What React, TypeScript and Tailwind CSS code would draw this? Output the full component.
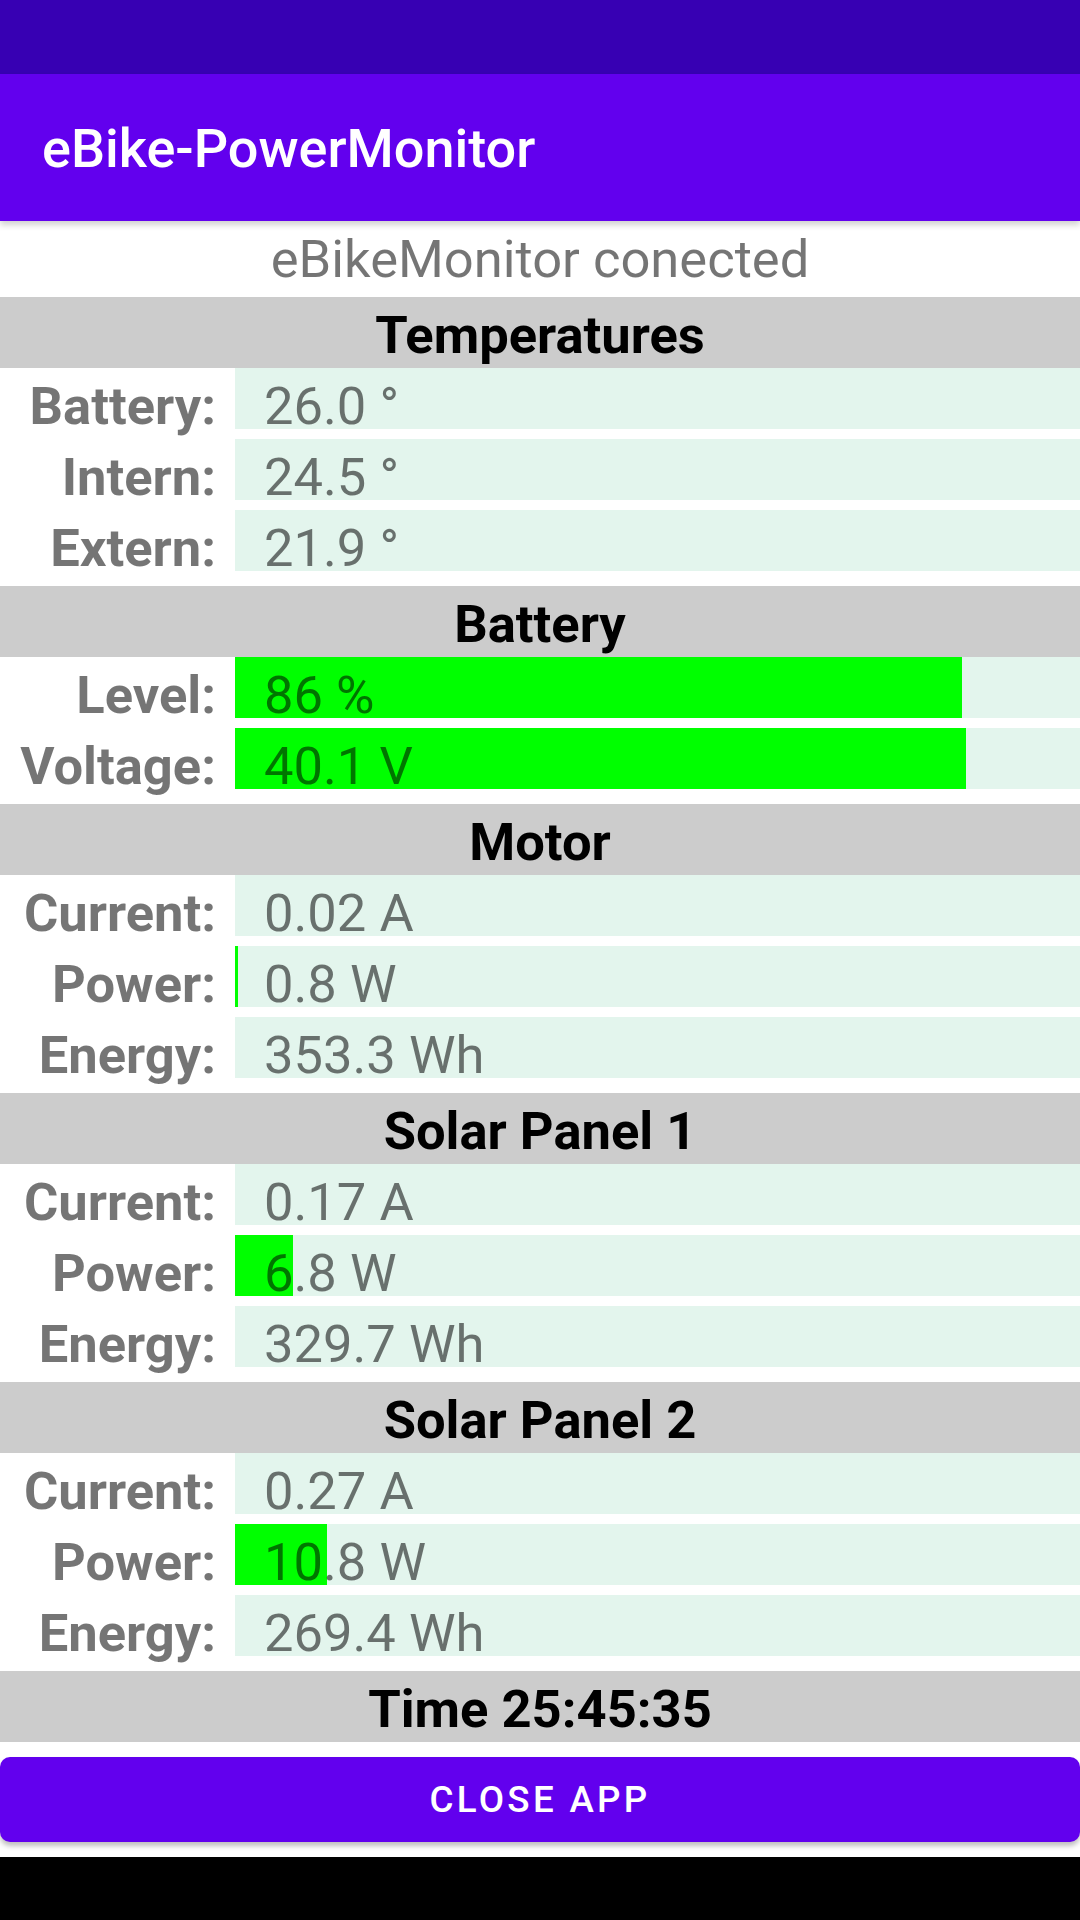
import React from 'react';

type Row = {
  label: string;
  value: string;
  bar?: number; // px width of green fill
};

type Section = {
  title: string;
  rows: Row[];
};

const SECTIONS: Section[] = [
  {
    title: 'Temperatures',
    rows: [
      { label: 'Battery:', value: '26.0 °' },
      { label: 'Intern:', value: '24.5 °' },
      { label: 'Extern:', value: '21.9 °' },
    ],
  },
  {
    title: 'Battery',
    rows: [
      { label: 'Level:', value: '86 %', bar: 727 },
      { label: 'Voltage:', value: '40.1 V', bar: 731 },
    ],
  },
  {
    title: 'Motor',
    rows: [
      { label: 'Current:', value: '0.02 A' },
      { label: 'Power:', value: '0.8 W', bar: 3 },
      { label: 'Energy:', value: '353.3 Wh' },
    ],
  },
  {
    title: 'Solar Panel 1',
    rows: [
      { label: 'Current:', value: '0.17 A' },
      { label: 'Power:', value: '6.8 W', bar: 58 },
      { label: 'Energy:', value: '329.7 Wh' },
    ],
  },
  {
    title: 'Solar Panel 2',
    rows: [
      { label: 'Current:', value: '0.27 A' },
      { label: 'Power:', value: '10.8 W', bar: 92 },
      { label: 'Energy:', value: '269.4 Wh' },
    ],
  },
];

function Header({ title }: { title: string }) {
  return (
    <div className="h-[71px] bg-[#cccccc] text-center text-[52.5px] font-bold leading-[76px] text-black">
      {title}
    </div>
  );
}

function ValueRow({ row }: { row: Row }) {
  return (
    <div className="flex h-[61px]">
      <div className="w-[216px] shrink-0 text-right text-[52.5px] font-bold leading-[76px] text-black/[0.54]">
        {row.label}
      </div>
      <div className="relative ml-[19px] flex-1 bg-[#e3f5ed]">
        {row.bar !== undefined && (
          <div className="absolute inset-y-0 left-0 bg-[#00ff00]" style={{ width: row.bar }} />
        )}
        <div className="relative pl-[29px] text-[52.5px] leading-[76px] text-black/[0.54] whitespace-nowrap">
          {row.value}
        </div>
      </div>
    </div>
  );
}

export default function App() {
  return (
    <div className="flex h-[1920px] w-[1080px] flex-col overflow-hidden bg-white font-['Roboto',sans-serif]">
      {/* status bar */}
      <div className="h-[74px] shrink-0 bg-[#3700b3]" />

      {/* app bar */}
      <div className="relative z-10 h-[147px] shrink-0 overflow-hidden bg-[#6200ee] pl-[42px] text-[54px] font-medium leading-[150px] text-white shadow-[0_4px_6px_rgba(0,0,0,0.18)]">
        eBike-PowerMonitor
      </div>

      <div className="h-[76px] shrink-0 text-center text-[52.5px] leading-[76px] text-black/[0.54]">
        eBikeMonitor conected
      </div>

      {SECTIONS.map((s) => (
        <div key={s.title} className="shrink-0">
          <Header title={s.title} />
          <div className="flex flex-col gap-[10px] pb-[15px]">
            {s.rows.map((r) => (
              <ValueRow key={r.label} row={r} />
            ))}
          </div>
        </div>
      ))}

      <div className="shrink-0">
        <Header title="Time 25:45:35" />
      </div>

      <div className="shrink-0 pt-[15px] pb-[15px]">
        <button className="h-[85px] w-full rounded-[10px] bg-[#6200ee] text-[36.75px] font-medium uppercase leading-[86px] tracking-[3.3px] text-white shadow-[0_4px_5px_rgba(0,0,0,0.25)]">
          Close App
        </button>
      </div>

      <div className="flex-1 bg-black" />
    </div>
  );
}
